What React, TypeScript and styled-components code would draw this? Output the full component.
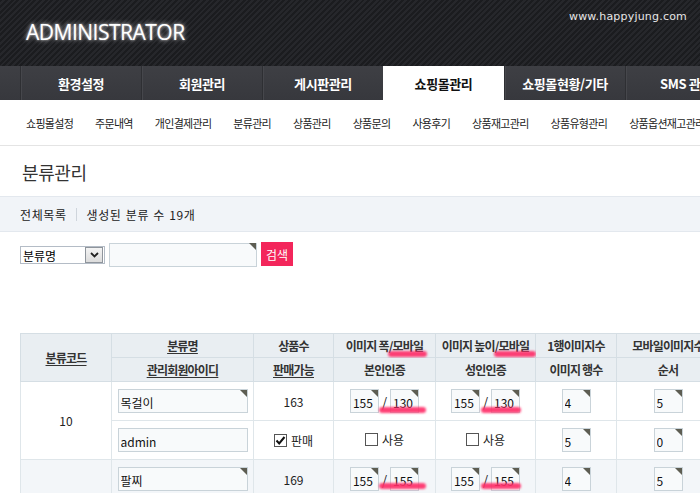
import React from "react";
import styled, { createGlobalStyle } from "styled-components";

const Global = createGlobalStyle`
  html, body { margin: 0; padding: 0; background: #fff; }
  body {
    width: 700px;
    height: 493px;
    overflow: hidden;
    font-family: "Noto Sans CJK KR", "Noto Sans", sans-serif;
    color: #222;
  }
  * { box-sizing: border-box; }
`;

const Page = styled.div`
  width: 700px;
  overflow: hidden;
`;

const TopBar = styled.header`
  height: 66px;
  background: repeating-linear-gradient(
    135deg,
    #1b1c1f 0px,
    #1b1c1f 2px,
    #26272b 2px,
    #26272b 4px
  );
  display: flex;
  align-items: flex-start;
  justify-content: space-between;
  padding: 0 13px 0 26px;
`;

const Logo = styled.div`
  margin-top: 18px;
  font-family: "Open Sans", "DejaVu Sans", sans-serif;
  font-size: 21px;
  letter-spacing: -0.5px;
  color: #fff;
  text-shadow: 0 0 5px rgba(255, 255, 255, 0.75), 0 0 2px rgba(255, 255, 255, 0.6);
`;

const SiteUrl = styled.div`
  margin-top: 10px;
  font-family: "DejaVu Sans", sans-serif;
  font-size: 11px;
  letter-spacing: 0.2px;
  color: #e6e6e6;
`;

const Nav = styled.nav`
  height: 34px;
  background: linear-gradient(#3e3f44, #37383d);
  display: flex;
  padding-left: 20px;
  white-space: nowrap;
`;

const NavItem = styled.div<{ $active?: boolean }>`
  flex: 0 0 121px;
  display: flex;
  align-items: center;
  justify-content: center;
  font-size: 13px;
  font-weight: 700;
  letter-spacing: -0.4px;
  color: ${(p) => (p.$active ? "#111" : "#fff")};
  background: ${(p) => (p.$active ? "#fff" : "transparent")};
  border-left: ${(p) => (p.$active ? "none" : "1px solid #2e2f33")};
  box-shadow: ${(p) => (p.$active ? "none" : "inset 1px 0 0 #46474c")};
`;

const SubNav = styled.div`
  height: 46px;
  border-bottom: 1px solid #e4e4e4;
  display: flex;
  align-items: center;
  padding-left: 26px;
  white-space: nowrap;
`;

const SubItem = styled.span`
  font-size: 11px;
  letter-spacing: -0.7px;
  color: #222;
`;

const SubSep = styled.span`
  display: inline-block;
  width: 1px;
  height: 12px;
  background: #d4d4d4;
  margin: 0 10px 0 12px;
`;

const Title = styled.h1`
  margin: 0;
  height: 50px;
  display: flex;
  align-items: center;
  padding: 2px 0 0 22px;
  font-size: 18px;
  font-weight: 400;
  letter-spacing: -0.4px;
  color: #333;
`;

const InfoBar = styled.div`
  height: 36px;
  background: #f1f4f8;
  border-top: 1px solid #e3e8ee;
  border-bottom: 1px solid #e3e8ee;
  display: flex;
  align-items: center;
  padding-left: 20px;
  font-size: 12px;
  letter-spacing: 0.6px;
  word-spacing: 1px;
  color: #222;
`;

const InfoSep = styled.span`
  display: inline-block;
  width: 1px;
  height: 13px;
  background: #cfd5dc;
  margin: 0 10px 0 9px;
`;

const SearchRow = styled.div`
  display: flex;
  align-items: flex-start;
  gap: 4px;
  padding: 10px 0 0 20px;
  height: 101px;
`;

const SelectBox = styled.div`
  margin-top: 4px;
  width: 85px;
  height: 18px;
  border: 1px solid #b4bcc6;
  display: flex;
  align-items: center;
  justify-content: space-between;
  padding-left: 2px;
  font-size: 12px;
  color: #000;
  background: #fff;
`;

const SelectArrow = styled.span`
  width: 18px;
  height: 16px;
  border: 1px solid #8f959c;
  background: linear-gradient(#f4f4f4, #dcdcdc);
  display: flex;
  align-items: center;
  justify-content: center;
  margin-right: 1px;
`;

const FieldWrap = styled.span<{ $w: number; $h?: number }>`
  position: relative;
  display: inline-block;
  width: ${(p) => p.$w}px;
  height: ${(p) => p.$h ?? 24}px;
  vertical-align: middle;
`;

const Field = styled.input`
  width: 100%;
  height: 100%;
  border: 1px solid #c9d3d9;
  background: #f8fafb;
  padding: 2px 0 0 2px;
  font-family: "Noto Sans CJK KR", "Noto Sans", sans-serif;
  font-size: 12px;
  color: #111;
  outline: none;
`;

const Corner = styled.span`
  position: absolute;
  top: 1px;
  right: 1px;
  width: 0;
  height: 0;
  border-top: 7px solid #5d5d52;
  border-left: 7px solid transparent;
`;

const SearchBtn = styled.button`
  width: 32px;
  height: 24px;
  border: none;
  background: #f3265b;
  color: #fff;
  font-family: "Noto Sans CJK KR", sans-serif;
  font-size: 12px;
  padding: 0;
`;

const Table = styled.table`
  margin-left: 20px;
  border-collapse: collapse;
  table-layout: fixed;
  width: 699px;
  font-size: 12px;
`;

const Th = styled.th<{ $u?: boolean }>`
  position: relative;
  height: 24px;
  background: #e9eef2;
  border: 1px solid #d5dee4;
  font-weight: 700;
  font-size: 12px;
  letter-spacing: -0.8px;
  color: #333;
  text-decoration: ${(p) => (p.$u ? "underline" : "none")};
  text-underline-offset: 2px;
  white-space: nowrap;
  padding: 0;
`;

const Tr = styled.tr<{ $alt?: boolean }>`
  background: ${(p) => (p.$alt ? "#f3f6f9" : "#fff")};
`;

const Td = styled.td`
  position: relative;
  height: 39px;
  border: 1px solid #dfe6ea;
  text-align: center;
  vertical-align: middle;
  padding: 0;
  color: #222;
  white-space: nowrap;
`;

const Pair = styled.span`
  display: inline-flex;
  align-items: center;
  gap: 3px;
`;

const Slash = styled.span`
  font-size: 13px;
  color: #222;
`;

const Check = styled.span`
  display: inline-flex;
  align-items: center;
  gap: 4px;
  font-size: 12px;
`;

const Box = styled.span`
  width: 13px;
  height: 13px;
  border: 1px solid #555;
  background: #fff;
  display: inline-flex;
  align-items: center;
  justify-content: center;
`;

const Mark = styled.span<{ $l: number; $t: number; $w: number }>`
  position: absolute;
  left: ${(p) => p.$l}px;
  top: ${(p) => p.$t}px;
  width: ${(p) => p.$w}px;
  height: 6px;
  border-radius: 3px;
  background: #ff2d68;
  filter: blur(1.3px);
  opacity: 0.9;
  pointer-events: none;
`;

const Input = ({ w, value, corner = true }: { w: number; value: string; corner?: boolean }) => (
  <FieldWrap $w={w}>
    <Field defaultValue={value} />
    {corner && <Corner />}
  </FieldWrap>
);

const Small = ({ value }: { value: string }) => <Input w={29} value={value} />;

const Chevron = () => (
  <svg width="9" height="6" viewBox="0 0 9 6">
    <path d="M1 1 L4.5 4.5 L8 1" stroke="#222" strokeWidth="1.8" fill="none" />
  </svg>
);

const CheckMark = () => (
  <svg width="11" height="11" viewBox="0 0 11 11">
    <path d="M1.5 5.5 L4.2 8.5 L9.5 2" stroke="#111" strokeWidth="2" fill="none" />
  </svg>
);

const navItems = ["환경설정", "회원관리", "게시판관리", "쇼핑몰관리", "쇼핑몰현황/기타", "SMS 관리"];
const subItems = [
  "쇼핑몰설정",
  "주문내역",
  "개인결제관리",
  "분류관리",
  "상품관리",
  "상품문의",
  "사용후기",
  "상품재고관리",
  "상품유형관리",
  "상품옵션재고관리",
];

type Cat = {
  code: string;
  name: string;
  count: string;
  w: [string, string];
  h: [string, string];
  perRow: string;
  mobile: string;
  rows: string;
  order: string;
  alt?: boolean;
  markTop: number;
};

const cats: Cat[] = [
  { code: "10", name: "목걸이", count: "163", w: ["155", "130"], h: ["155", "130"], perRow: "4", mobile: "5", rows: "5", order: "0", markTop: 25 },
  { code: "20", name: "팔찌", count: "169", w: ["155", "155"], h: ["155", "155"], perRow: "4", mobile: "5", rows: "5", order: "0", alt: true, markTop: 23 },
];

export default function App() {
  return (
    <Page>
      <Global />
      <TopBar>
        <Logo>ADMINISTRATOR</Logo>
        <SiteUrl>www.happyjung.com</SiteUrl>
      </TopBar>
      <Nav>
        {navItems.map((n) => (
          <NavItem key={n} $active={n === "쇼핑몰관리"}>
            {n}
          </NavItem>
        ))}
      </Nav>
      <SubNav>
        {subItems.map((s, i) => (
          <React.Fragment key={s}>
            {i > 0 && <SubSep />}
            <SubItem>{s}</SubItem>
          </React.Fragment>
        ))}
      </SubNav>
      <Title>분류관리</Title>
      <InfoBar>
        전체목록
        <InfoSep />
        생성된 분류 수 19개
      </InfoBar>
      <SearchRow>
        <SelectBox>
          분류명
          <SelectArrow>
            <Chevron />
          </SelectArrow>
        </SelectBox>
        <Input w={148} value="" />
        <SearchBtn>검색</SearchBtn>
      </SearchRow>
      <Table>
        <colgroup>
          <col style={{ width: 91 }} />
          <col style={{ width: 142 }} />
          <col style={{ width: 80 }} />
          <col style={{ width: 102 }} />
          <col style={{ width: 100 }} />
          <col style={{ width: 81 }} />
          <col style={{ width: 103 }} />
        </colgroup>
        <thead>
          <tr>
            <Th $u rowSpan={2}>
              분류코드
            </Th>
            <Th $u>분류명</Th>
            <Th>상품수</Th>
            <Th>
              이미지 폭/모바일
              <Mark $l={54} $t={17} $w={39} />
            </Th>
            <Th>
              이미지 높이/모바일
              <Mark $l={58} $t={17} $w={42} />
            </Th>
            <Th>1행이미지수</Th>
            <Th>모바일이미지수</Th>
          </tr>
          <tr>
            <Th $u>관리회원아이디</Th>
            <Th $u>판매가능</Th>
            <Th>본인인증</Th>
            <Th>성인인증</Th>
            <Th>이미지 행수</Th>
            <Th>순서</Th>
          </tr>
        </thead>
        <tbody>
          {cats.map((c) => (
            <React.Fragment key={c.code}>
              <Tr $alt={c.alt}>
                <Td rowSpan={2}>{c.code}</Td>
                <Td>
                  <Input w={130} value={c.name} />
                </Td>
                <Td>{c.count}</Td>
                <Td>
                  <Pair>
                    <Small value={c.w[0]} />
                    <Slash>/</Slash>
                    <Small value={c.w[1]} />
                  </Pair>
                  <Mark $l={45} $t={c.markTop} $w={47} />
                </Td>
                <Td>
                  <Pair>
                    <Small value={c.h[0]} />
                    <Slash>/</Slash>
                    <Small value={c.h[1]} />
                  </Pair>
                  <Mark $l={45} $t={c.markTop} $w={40} />
                </Td>
                <Td>
                  <Small value={c.perRow} />
                </Td>
                <Td>
                  <Small value={c.mobile} />
                </Td>
              </Tr>
              <Tr $alt={c.alt}>
                <Td>
                  <Input w={130} value="admin" corner={false} />
                </Td>
                <Td>
                  <Check>
                    <Box>
                      <CheckMark />
                    </Box>
                    판매
                  </Check>
                </Td>
                <Td>
                  <Check>
                    <Box />
                    사용
                  </Check>
                </Td>
                <Td>
                  <Check>
                    <Box />
                    사용
                  </Check>
                </Td>
                <Td>
                  <Small value={c.rows} />
                </Td>
                <Td>
                  <Small value={c.order} />
                </Td>
              </Tr>
            </React.Fragment>
          ))}
        </tbody>
      </Table>
    </Page>
  );
}
